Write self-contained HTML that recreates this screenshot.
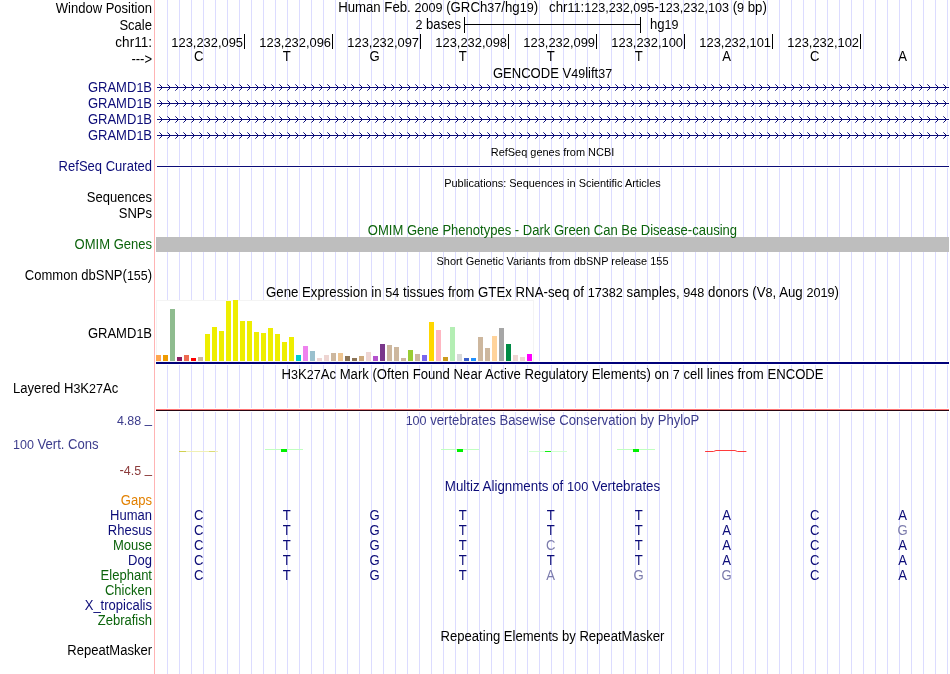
<!DOCTYPE html>
<html><head><meta charset="utf-8"><title>UCSC Genome Browser - chr11:123,232,095-123,232,103</title>
<style>
html,body{margin:0;padding:0;background:#fff;}
body{width:950px;height:674px;overflow:hidden;position:relative;font-family:"Liberation Sans",sans-serif;}
#img{position:absolute;left:0;top:0;width:950px;height:674px;overflow:hidden;background:#fff;}
#gl{position:absolute;left:0;top:0;}
.t{position:absolute;white-space:nowrap;font-size:14px;line-height:16px;height:16px;color:#000;transform:scaleX(0.935);transform-origin:0 50%;}
.r{text-align:right;left:0;width:152px;transform-origin:100% 50%;transform:scaleX(0.93);}
.c{text-align:center;left:155px;width:795px;transform-origin:50% 50%;}
.s{font-size:11px;transform:scaleX(0.995);}
.b{color:#0c0c78;}
.g{color:#0c640c;}
.l{color:#7c7cac;}
.n{font-size:13.4px;}
#tx{position:absolute;left:0;top:0;width:950px;height:674px;will-change:transform;}
</style></head><body><div id="img">
<svg id="gl" width="950" height="674" viewBox="0 0 950 674" shape-rendering="crispEdges">
<path d="M167.5 0V674M179.5 0V674M191.5 0V674M203.5 0V674M215.5 0V674M227.5 0V674M239.5 0V674M251.5 0V674M263.5 0V674M275.5 0V674M287.5 0V674M299.5 0V674M311.5 0V674M323.5 0V674M335.5 0V674M347.5 0V674M359.5 0V674M371.5 0V674M383.5 0V674M395.5 0V674M407.5 0V674M419.5 0V674M431.5 0V674M443.5 0V674M455.5 0V674M467.5 0V674M479.5 0V674M491.5 0V674M503.5 0V674M515.5 0V674M527.5 0V674M539.5 0V674M551.5 0V674M563.5 0V674M575.5 0V674M587.5 0V674M599.5 0V674M611.5 0V674M623.5 0V674M635.5 0V674M647.5 0V674M659.5 0V674M671.5 0V674M683.5 0V674M695.5 0V674M707.5 0V674M719.5 0V674M731.5 0V674M743.5 0V674M755.5 0V674M767.5 0V674M779.5 0V674M791.5 0V674M803.5 0V674M815.5 0V674M827.5 0V674M839.5 0V674M851.5 0V674M863.5 0V674M875.5 0V674M887.5 0V674M899.5 0V674M911.5 0V674M923.5 0V674M935.5 0V674M947.5 0V674" stroke="#dcdcff" stroke-width="1" fill="none"/>
<path d="M154.5 0V674" stroke="#ffb4b4" stroke-width="1" fill="none"/>
<path d="M464.5 17V33M640.5 17V33M464 24.5H641" stroke="#000" stroke-width="1" fill="none"/>
<path d="M244.5 34V49M332.5 34V49M420.5 34V49M508.5 34V49M596.5 34V49M684.5 34V49M772.5 34V49M860.5 34V49" stroke="#000" stroke-width="1" fill="none"/>
<rect x="157" y="86" width="792" height="3" fill="#fff"/>
<path d="M157 87.5H949" stroke="#0c0c78" stroke-width="1" fill="none"/>
<rect x="157" y="102" width="792" height="3" fill="#fff"/>
<path d="M157 103.5H949" stroke="#0c0c78" stroke-width="1" fill="none"/>
<rect x="157" y="118" width="792" height="3" fill="#fff"/>
<path d="M157 119.5H949" stroke="#0c0c78" stroke-width="1" fill="none"/>
<rect x="157" y="134" width="792" height="3" fill="#fff"/>
<path d="M157 135.5H949" stroke="#0c0c78" stroke-width="1" fill="none"/>
<defs><pattern id="ch" x="155" y="84" width="8" height="16" patternUnits="userSpaceOnUse"><path d="M5 1h1v1h-1zM6 2h1v1h-1zM6 4h1v1h-1zM5 5h1v1h-1z" fill="#0c0c78"/><path d="M4 0h1v1h-1zM4 6h1v1h-1z" fill="#5c5ca8"/></pattern></defs>
<rect x="157" y="84" width="792" height="55" fill="url(#ch)"/>
<rect x="157" y="165" width="792" height="3" fill="#fff"/>
<path d="M157 166.5H949" stroke="#0c0c78" stroke-width="1" fill="none"/>
<rect x="156" y="237" width="793" height="15" fill="#bebebe"/>
<rect x="156" y="300" width="378" height="62" fill="#f4f4f4"/>
<rect x="157" y="301" width="376" height="60" fill="#fff"/>
<rect x="156" y="355" width="5" height="6" fill="#FFA54F"/>
<rect x="163" y="355" width="5" height="6" fill="#EE9A00"/>
<rect x="170" y="309" width="5" height="52" fill="#8FBC8F"/>
<rect x="177" y="357" width="5" height="4" fill="#8B1C62"/>
<rect x="184" y="355" width="5" height="6" fill="#EE6A50"/>
<rect x="191" y="358" width="5" height="3" fill="#FF0000"/>
<rect x="198" y="357" width="5" height="4" fill="#CDB79E"/>
<rect x="205" y="334" width="5" height="27" fill="#EEEE00"/>
<rect x="212" y="327" width="5" height="34" fill="#EEEE00"/>
<rect x="219" y="331" width="5" height="30" fill="#EEEE00"/>
<rect x="226" y="301" width="5" height="60" fill="#EEEE00"/>
<rect x="233" y="300" width="5" height="61" fill="#EEEE00"/>
<rect x="240" y="321" width="5" height="40" fill="#EEEE00"/>
<rect x="247" y="321" width="5" height="40" fill="#EEEE00"/>
<rect x="254" y="332" width="5" height="29" fill="#EEEE00"/>
<rect x="261" y="333" width="5" height="28" fill="#EEEE00"/>
<rect x="268" y="328" width="5" height="33" fill="#EEEE00"/>
<rect x="275" y="334" width="5" height="27" fill="#EEEE00"/>
<rect x="282" y="342" width="5" height="19" fill="#EEEE00"/>
<rect x="289" y="337" width="5" height="24" fill="#EEEE00"/>
<rect x="296" y="355" width="5" height="6" fill="#00CDCD"/>
<rect x="303" y="346" width="5" height="15" fill="#EE82EE"/>
<rect x="310" y="351" width="5" height="10" fill="#9AC0CD"/>
<rect x="317" y="358" width="5" height="3" fill="#EED5D2"/>
<rect x="324" y="355" width="5" height="6" fill="#EED5D2"/>
<rect x="331" y="353" width="5" height="8" fill="#CDB79E"/>
<rect x="338" y="353" width="5" height="8" fill="#EEC591"/>
<rect x="345" y="356" width="5" height="5" fill="#8B7355"/>
<rect x="352" y="358" width="5" height="3" fill="#8B7355"/>
<rect x="359" y="356" width="5" height="5" fill="#CDAA7D"/>
<rect x="366" y="352" width="5" height="9" fill="#EED5D2"/>
<rect x="373" y="356" width="5" height="5" fill="#B452CD"/>
<rect x="380" y="344" width="5" height="17" fill="#7A378B"/>
<rect x="387" y="345" width="5" height="16" fill="#CDB79E"/>
<rect x="394" y="347" width="5" height="14" fill="#CDB79E"/>
<rect x="401" y="358" width="5" height="3" fill="#CDB79E"/>
<rect x="408" y="350" width="5" height="11" fill="#9ACD32"/>
<rect x="415" y="354" width="5" height="7" fill="#CDB79E"/>
<rect x="422" y="355" width="5" height="6" fill="#7A67EE"/>
<rect x="429" y="322" width="5" height="39" fill="#FFD700"/>
<rect x="436" y="330" width="5" height="31" fill="#FFB6C1"/>
<rect x="443" y="357" width="5" height="4" fill="#CD9B1D"/>
<rect x="450" y="327" width="5" height="34" fill="#B4EEB4"/>
<rect x="457" y="354" width="5" height="7" fill="#D9D9D9"/>
<rect x="464" y="358" width="5" height="3" fill="#3A5FCD"/>
<rect x="471" y="358" width="5" height="3" fill="#1E90FF"/>
<rect x="478" y="337" width="5" height="24" fill="#CDB79E"/>
<rect x="485" y="348" width="5" height="13" fill="#CDB79E"/>
<rect x="492" y="336" width="5" height="25" fill="#FFD39B"/>
<rect x="499" y="328" width="5" height="33" fill="#A6A6A6"/>
<rect x="506" y="344" width="5" height="17" fill="#008B45"/>
<rect x="513" y="355" width="5" height="6" fill="#EED5D2"/>
<rect x="520" y="357" width="5" height="4" fill="#EED5D2"/>
<rect x="527" y="354" width="5" height="7" fill="#FF00FF"/>
<rect x="534" y="361" width="415" height="4" fill="#fff"/>
<rect x="156" y="364" width="378" height="1" fill="#fff"/>
<rect x="156" y="362" width="793" height="2" fill="#00007a"/>
<rect x="156" y="408" width="793" height="4" fill="#fff"/>
<rect x="156" y="409" width="793" height="1" fill="#ff7474"/>
<rect x="156" y="410" width="793" height="1" fill="#2a0612"/>
<rect x="179" y="451" width="39" height="1" fill="#f0f0b4"/>
<rect x="179" y="451" width="7" height="1" fill="#d0d050"/>
<rect x="209" y="451" width="6" height="1" fill="#dcdc78"/>
<rect x="265" y="449" width="38" height="1" fill="#c0ffc0"/>
<rect x="281" y="449" width="6" height="3" fill="#00f000"/>
<rect x="441" y="449" width="38" height="1" fill="#c0ffc0"/>
<rect x="457" y="449" width="6" height="3" fill="#00f000"/>
<rect x="617" y="449" width="38" height="1" fill="#c0ffc0"/>
<rect x="633" y="449" width="6" height="3" fill="#00f000"/>
<rect x="529" y="451" width="38" height="1" fill="#d2ffd2"/>
<rect x="545" y="451" width="6" height="1" fill="#10f010"/>
<path d="M705.5 451.5H713.5L716 450.5H735L737.5 451.5H746" stroke="#ff1818" stroke-width="0.85" fill="none" shape-rendering="auto" stroke-linecap="round"/>
</svg>
<div id="tx">
<div class="t r" style="top:0px;">Window Position</div>
<div class="t r" style="top:17px;">Scale</div>
<div class="t r" style="top:34px;transform:scaleX(0.968);">chr11:</div>
<div class="t r" style="top:51px;">---&gt;</div>
<div class="t r b" style="top:79px;">GRAMD<span class="n">1</span>B</div>
<div class="t r b" style="top:95px;">GRAMD<span class="n">1</span>B</div>
<div class="t r b" style="top:111px;">GRAMD<span class="n">1</span>B</div>
<div class="t r b" style="top:127px;">GRAMD<span class="n">1</span>B</div>
<div class="t r b" style="top:158px;">RefSeq Curated</div>
<div class="t r" style="top:189px;">Sequences</div>
<div class="t r" style="top:205px;">SNPs</div>
<div class="t r g" style="top:236px;">OMIM Genes</div>
<div class="t r" style="top:267px;">Common dbSNP(<span class="n">155</span>)</div>
<div class="t r" style="top:325px;">GRAMD<span class="n">1</span>B</div>
<div class="t " style="top:380px;left:13px;">Layered H<span class="n">3</span>K<span class="n">27</span>Ac</div>
<div class="t r" style="top:412px;color:#3c3c8c;"><span class="n">4.88</span> <span style="position:relative;top:-2px">_</span></div>
<div class="t " style="top:436px;left:13px;color:#3c3c8c;"><span class="n">100</span> Vert. Cons</div>
<div class="t r" style="top:462px;color:#8c3c3c;">-<span class="n">4.5</span> <span style="position:relative;top:-2px">_</span></div>
<div class="t r" style="top:492px;color:#e28000;">Gaps</div>
<div class="t r b" style="top:507px;">Human</div>
<div class="t r b" style="top:522px;">Rhesus</div>
<div class="t r g" style="top:537px;">Mouse</div>
<div class="t r b" style="top:552px;">Dog</div>
<div class="t r g" style="top:567px;">Elephant</div>
<div class="t r g" style="top:582px;">Chicken</div>
<div class="t r b" style="top:597px;">X_tropicalis</div>
<div class="t r g" style="top:612px;">Zebrafish</div>
<div class="t r" style="top:642px;">RepeatMasker</div>
<div class="t c" style="top:-1px;transform:scaleX(0.9425);">Human Feb. <span class="n">2009</span> (GRCh<span class="n">37</span>/hg<span class="n">19</span>)&nbsp;&nbsp; chr<span class="n">11</span>:<span class="n">123,232,095</span>-<span class="n">123,232,103</span> (<span class="n">9</span> bp)</div>
<div class="t " style="top:16px;left:0;width:461px;text-align:right;transform-origin:100% 50%;"><span class="n">2</span> bases</div>
<div class="t " style="top:16px;left:650px;">hg<span class="n">19</span></div>
<div class="t c" style="top:65px;transform:scaleX(0.9326);">GENCODE V<span class="n">49</span>lift<span class="n">37</span></div>
<div class="t c s" style="top:144px;">RefSeq genes from NCBI</div>
<div class="t c s" style="top:175px;">Publications: Sequences in Scientific Articles</div>
<div class="t c g" style="top:222px;transform:scaleX(0.9304);">OMIM Gene Phenotypes - Dark Green Can Be Disease-causing</div>
<div class="t c s" style="top:253px;">Short Genetic Variants from dbSNP release 155</div>
<div class="t c" style="top:284px;transform:scaleX(0.9458);">Gene Expression in <span class="n">54</span> tissues from GTEx RNA-seq of <span class="n">17382</span> samples, <span class="n">948</span> donors (V<span class="n">8</span>, Aug <span class="n">2019</span>)</div>
<div class="t c" style="top:366px;transform:scaleX(0.9388);">H<span class="n">3</span>K<span class="n">27</span>Ac Mark (Often Found Near Active Regulatory Elements) on <span class="n">7</span> cell lines from ENCODE</div>
<div class="t c" style="top:412px;color:#3c3c8c;transform:scaleX(0.9372);"><span class="n">100</span> vertebrates Basewise Conservation by PhyloP</div>
<div class="t c b" style="top:478px;transform:scaleX(0.9519);">Multiz Alignments of <span class="n">100</span> Vertebrates</div>
<div class="t c" style="top:628px;transform:scaleX(0.9337);">Repeating Elements by RepeatMasker</div>
<div class="t " style="top:35px;left:144px;width:99px;text-align:right;transform-origin:100% 50%;font-size:13px;transform:scaleX(0.992);">123,232,095</div>
<div class="t " style="top:35px;left:232px;width:99px;text-align:right;transform-origin:100% 50%;font-size:13px;transform:scaleX(0.992);">123,232,096</div>
<div class="t " style="top:35px;left:320px;width:99px;text-align:right;transform-origin:100% 50%;font-size:13px;transform:scaleX(0.992);">123,232,097</div>
<div class="t " style="top:35px;left:408px;width:99px;text-align:right;transform-origin:100% 50%;font-size:13px;transform:scaleX(0.992);">123,232,098</div>
<div class="t " style="top:35px;left:496px;width:99px;text-align:right;transform-origin:100% 50%;font-size:13px;transform:scaleX(0.992);">123,232,099</div>
<div class="t " style="top:35px;left:584px;width:99px;text-align:right;transform-origin:100% 50%;font-size:13px;transform:scaleX(0.992);">123,232,100</div>
<div class="t " style="top:35px;left:672px;width:99px;text-align:right;transform-origin:100% 50%;font-size:13px;transform:scaleX(0.992);">123,232,101</div>
<div class="t " style="top:35px;left:760px;width:99px;text-align:right;transform-origin:100% 50%;font-size:13px;transform:scaleX(0.992);">123,232,102</div>
<div class="t " style="top:48px;left:180.1px;width:40px;text-align:center;">C</div>
<div class="t " style="top:48px;left:268.1px;width:40px;text-align:center;">T</div>
<div class="t " style="top:48px;left:356.1px;width:40px;text-align:center;">G</div>
<div class="t " style="top:48px;left:444.1px;width:40px;text-align:center;">T</div>
<div class="t " style="top:48px;left:532.1px;width:40px;text-align:center;">T</div>
<div class="t " style="top:48px;left:620.1px;width:40px;text-align:center;">T</div>
<div class="t " style="top:48px;left:708.1px;width:40px;text-align:center;">A</div>
<div class="t " style="top:48px;left:796.1px;width:40px;text-align:center;">C</div>
<div class="t " style="top:48px;left:884.1px;width:40px;text-align:center;">A</div>
<div class="t b" style="top:507px;left:180.1px;width:40px;text-align:center;">C</div>
<div class="t b" style="top:507px;left:268.1px;width:40px;text-align:center;">T</div>
<div class="t b" style="top:507px;left:356.1px;width:40px;text-align:center;">G</div>
<div class="t b" style="top:507px;left:444.1px;width:40px;text-align:center;">T</div>
<div class="t b" style="top:507px;left:532.1px;width:40px;text-align:center;">T</div>
<div class="t b" style="top:507px;left:620.1px;width:40px;text-align:center;">T</div>
<div class="t b" style="top:507px;left:708.1px;width:40px;text-align:center;">A</div>
<div class="t b" style="top:507px;left:796.1px;width:40px;text-align:center;">C</div>
<div class="t b" style="top:507px;left:884.1px;width:40px;text-align:center;">A</div>
<div class="t b" style="top:522px;left:180.1px;width:40px;text-align:center;">C</div>
<div class="t b" style="top:522px;left:268.1px;width:40px;text-align:center;">T</div>
<div class="t b" style="top:522px;left:356.1px;width:40px;text-align:center;">G</div>
<div class="t b" style="top:522px;left:444.1px;width:40px;text-align:center;">T</div>
<div class="t b" style="top:522px;left:532.1px;width:40px;text-align:center;">T</div>
<div class="t b" style="top:522px;left:620.1px;width:40px;text-align:center;">T</div>
<div class="t b" style="top:522px;left:708.1px;width:40px;text-align:center;">A</div>
<div class="t b" style="top:522px;left:796.1px;width:40px;text-align:center;">C</div>
<div class="t l" style="top:522px;left:884.1px;width:40px;text-align:center;">G</div>
<div class="t b" style="top:537px;left:180.1px;width:40px;text-align:center;">C</div>
<div class="t b" style="top:537px;left:268.1px;width:40px;text-align:center;">T</div>
<div class="t b" style="top:537px;left:356.1px;width:40px;text-align:center;">G</div>
<div class="t b" style="top:537px;left:444.1px;width:40px;text-align:center;">T</div>
<div class="t l" style="top:537px;left:532.1px;width:40px;text-align:center;">C</div>
<div class="t b" style="top:537px;left:620.1px;width:40px;text-align:center;">T</div>
<div class="t b" style="top:537px;left:708.1px;width:40px;text-align:center;">A</div>
<div class="t b" style="top:537px;left:796.1px;width:40px;text-align:center;">C</div>
<div class="t b" style="top:537px;left:884.1px;width:40px;text-align:center;">A</div>
<div class="t b" style="top:552px;left:180.1px;width:40px;text-align:center;">C</div>
<div class="t b" style="top:552px;left:268.1px;width:40px;text-align:center;">T</div>
<div class="t b" style="top:552px;left:356.1px;width:40px;text-align:center;">G</div>
<div class="t b" style="top:552px;left:444.1px;width:40px;text-align:center;">T</div>
<div class="t b" style="top:552px;left:532.1px;width:40px;text-align:center;">T</div>
<div class="t b" style="top:552px;left:620.1px;width:40px;text-align:center;">T</div>
<div class="t b" style="top:552px;left:708.1px;width:40px;text-align:center;">A</div>
<div class="t b" style="top:552px;left:796.1px;width:40px;text-align:center;">C</div>
<div class="t b" style="top:552px;left:884.1px;width:40px;text-align:center;">A</div>
<div class="t b" style="top:567px;left:180.1px;width:40px;text-align:center;">C</div>
<div class="t b" style="top:567px;left:268.1px;width:40px;text-align:center;">T</div>
<div class="t b" style="top:567px;left:356.1px;width:40px;text-align:center;">G</div>
<div class="t b" style="top:567px;left:444.1px;width:40px;text-align:center;">T</div>
<div class="t l" style="top:567px;left:532.1px;width:40px;text-align:center;">A</div>
<div class="t l" style="top:567px;left:620.1px;width:40px;text-align:center;">G</div>
<div class="t l" style="top:567px;left:708.1px;width:40px;text-align:center;">G</div>
<div class="t b" style="top:567px;left:796.1px;width:40px;text-align:center;">C</div>
<div class="t b" style="top:567px;left:884.1px;width:40px;text-align:center;">A</div>
</div></div></body></html>
